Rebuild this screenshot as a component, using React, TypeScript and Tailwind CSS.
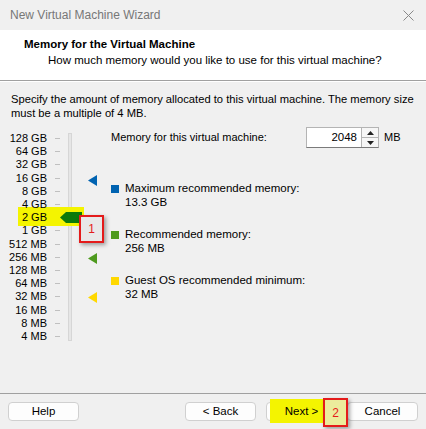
import React from "react";

const scale = [
  "128 GB", "64 GB", "32 GB", "16 GB", "8 GB", "4 GB", "2 GB", "1 GB",
  "512 MB", "256 MB", "128 MB", "64 MB", "32 MB", "16 MB", "8 MB", "4 MB",
];

const legend = [
  { color: "bg-[#0063b1]", label: "Maximum recommended memory:", value: "13.3 GB" },
  { color: "bg-[#4e9a1e]", label: "Recommended memory:", value: "256 MB" },
  { color: "bg-[#ffd800]", label: "Guest OS recommended minimum:", value: "32 MB" },
];

// pointer triangle on the slider scale
const Pointer = ({ color, top }: { color: string; top: string }) => (
  <svg className={`absolute left-[77px] ${top}`} width="9" height="11" viewBox="0 0 9 11">
    <polygon points="0,5.5 9,0 9,11" fill={color} />
  </svg>
);

function WizButton({ children }: { children: React.ReactNode }) {
  return (
    <button className="relative h-[19px] w-[71px] rounded-[4px] border border-[#d0d0d0] bg-[#fdfdfd] text-[11.5px] leading-none text-black">
      {children}
    </button>
  );
}

export default function App() {
  return (
    <div className="relative flex h-[429px] w-[426px] flex-col overflow-hidden bg-[#f0f0f0] font-['Liberation_Sans',Arial,sans-serif] text-[11px] text-black">
      {/* title bar */}
      <div className="flex h-[30px] shrink-0 items-center justify-between pl-[10px] pr-[12px] text-[12px] text-[#777]">
        <span>New Virtual Machine Wizard</span>
        <svg width="11" height="11" viewBox="0 0 11 11" stroke="#888" strokeWidth="1">
          <path d="M0.5 0.5 L10.5 10.5 M10.5 0.5 L0.5 10.5" />
        </svg>
      </div>

      {/* header */}
      <div className="h-[51px] shrink-0 border-b border-[#a0a0a0] bg-white pl-[24px] pt-[6px]">
        <div className="text-[11.5px] font-bold leading-[16px]">Memory for the Virtual Machine</div>
        <div className="pl-[24px] text-[11.5px] leading-[16px]">How much memory would you like to use for this virtual machine?</div>
      </div>

      {/* body */}
      <div className="flex-1 border-t border-white px-[11px] pt-[10px]">
        <p className="text-[11.2px] leading-[14px]">
          Specify the amount of memory allocated to this virtual machine. The memory size must be a multiple of 4 MB.
        </p>

        <div className="mt-[12px] flex">
          {/* slider */}
          <div className="relative flex w-[100px]">
            <div className="absolute left-[7px] top-[75px] h-[19px] w-[66px] bg-[#f4f400] z-[1]" />
            <div className="relative z-[2] flex w-[36px] flex-col items-end whitespace-nowrap leading-[13.2px]">
              {scale.map((s) => (
                <span key={s}>{s}</span>
              ))}
            </div>
            <div className="ml-[8px] flex w-[5px] flex-col">
              {scale.map((s) => (
                <div key={s} className="flex h-[13.2px] items-center">
                  <div className="h-px w-[5px] bg-[#c0c0c0]" />
                </div>
              ))}
            </div>
            <div className="ml-[8px] mt-[1px] h-[208px] w-[4px] border border-[#d6d6d6] bg-[#e6e6e6]" />

            {/* thumb */}
            <svg className="absolute left-[49px] top-[80px] z-[3]" width="22" height="11" viewBox="0 0 22 11">
              <polygon points="0,5.5 6,0 22,0 22,11 6,11" fill="#0b7a0b" />
            </svg>

            <Pointer color="#0063b1" top="top-[43px]" />
            <Pointer color="#4e9a1e" top="top-[121px]" />
            <Pointer color="#ffd800" top="top-[160px]" />

            {/* annotation 1 */}
            <div className="absolute left-[68px] top-[83px] z-[4] flex h-[28px] w-[25px] items-start justify-center border-2 border-[#e41b1b] bg-[#e8e8e8] pt-[3px] text-[12px] text-[#e41b1b] shadow-[2px_2px_4px_rgba(0,0,0,0.35)]">
              1
            </div>
          </div>

          {/* right side */}
          <div className="-mt-[5px] flex flex-1 flex-col">
            <div className="flex items-center">
              <span className="w-[195px]">Memory for this virtual machine:</span>
              <div className="flex h-[21px] border border-[#b4b4b4] border-b-[#7a7a7a]">
                <div className="flex w-[54px] items-center justify-end bg-white pr-[4px] text-[11.5px]">2048</div>
                <div className="flex w-[17px] flex-col border-l border-[#b4b4b4] bg-[#f6f6f6]">
                  <div className="flex flex-1 items-center justify-center border-b border-[#b4b4b4]">
                    <svg width="7" height="4" viewBox="0 0 7 4"><polygon points="0,4 3.5,0 7,4" fill="#222" /></svg>
                  </div>
                  <div className="flex flex-1 items-center justify-center">
                    <svg width="7" height="4" viewBox="0 0 7 4"><polygon points="0,0 3.5,4 7,0" fill="#222" /></svg>
                  </div>
                </div>
              </div>
              <span className="ml-[5px]">MB</span>
            </div>

            <div className="mt-[33px] flex flex-col gap-[18px]">
              {legend.map((l) => (
                <div key={l.label} className="flex">
                  <div className={`mt-[4px] h-[8px] w-[8px] ${l.color}`} />
                  <div className="ml-[6px] flex flex-col text-[11.5px] leading-[14px]">
                    <span>{l.label}</span>
                    <span>{l.value}</span>
                  </div>
                </div>
              ))}
            </div>
          </div>
        </div>
      </div>

      {/* footer */}
      <div className="flex h-[36px] shrink-0 items-center border-t border-[#a0a0a0] px-[8px]">
        <WizButton>Help</WizButton>
        <div className="ml-auto flex gap-[10px]">
          <WizButton>&lt; Back</WizButton>
          <WizButton>
            <div className="absolute left-[3px] top-[-4px] h-[24px] w-[53px] bg-[#f4f400]" />
            <span className="relative">Next &gt;</span>
          </WizButton>
          <WizButton>Cancel</WizButton>
        </div>
        <div className="absolute left-[323px] top-[398px] flex h-[29px] w-[25px] items-center justify-center border-2 border-[#e41b1b] bg-[#ecec9c] text-[12px] text-[#e41b1b] shadow-[2px_2px_4px_rgba(0,0,0,0.35)]">
          2
        </div>
      </div>
    </div>
  );
}
